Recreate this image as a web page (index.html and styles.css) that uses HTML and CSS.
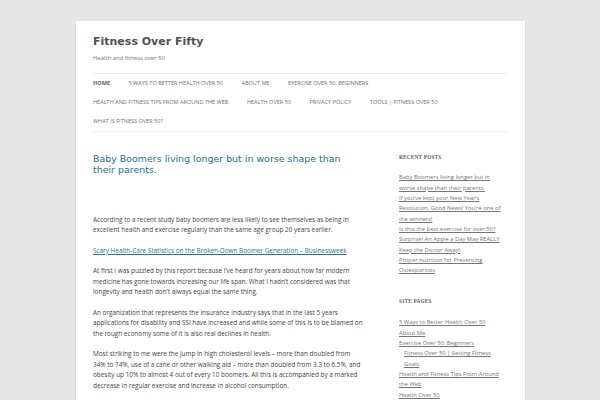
FILE: index.html
```html
<!DOCTYPE html>
<html lang="en">
<head>
<meta charset="utf-8">
<title>Fitness Over Fifty | Health and fitness over 50</title>
<link rel="stylesheet" href="styles.css">
</head>
<body>
<div class="site">
  <header class="site-header">
    <h1 class="site-title"><a href="#">Fitness Over Fifty</a></h1>
    <h2 class="site-description">Health and fitness over 50</h2>
    <nav class="main-navigation">
      <ul class="nav-menu">
        <li class="current"><a href="#">Home</a></li>
        <li><a href="#">5 Ways to Better Health Over 50</a></li>
        <li><a href="#">About Me</a></li>
        <li><a href="#">Exercise Over 50: Beginners</a></li>
        <li><a href="#">Health and Fitness Tips From Around the Web</a></li>
        <li><a href="#">Health Over 50</a></li>
        <li><a href="#">Privacy Policy</a></li>
        <li><a href="#">Tools | Fitness Over 50</a></li>
        <li><a href="#">What is Fitness Over 50?</a></li>
      </ul>
    </nav>
  </header>
  <div class="main">
    <div class="site-content">
      <article class="post">
        <h1 class="entry-title"><a href="#">Baby Boomers living longer but in worse shape than their parents.</a></h1>
        <div class="entry-content">
          <p>According to a recent study baby boomers are less likely to see themselves as being in excellent health and exercise regularly than the same age group 20 years earlier.</p>
          <p><a href="#">Scary Health-Care Statistics on the Broken-Down Boomer Generation &#8211; Businessweek</a></p>
          <p>At first I was puzzled by this report because I&#8217;ve heard for years about how far modern medicine has gone towards increasing our life span. What I hadn&#8217;t considered was that longevity and health don&#8217;t always equal the same thing.</p>
          <p>An organization that represents the insurance industry says that in the last 5 years applications for disability and SSI have increased and while some of this is to be blamed on the rough economy some of it is also real declines in health.</p>
          <p>Most striking to me were the jump in high cholesterol levels &#8211; more than doubled from 34% to 74%, use of a cane or other walking aid &#8211; more than doubled from 3.3 to 6.5%, and obesity up 10% to almost 4 out of every 10 boomers. All this is accompanied by a marked decrease in regular exercise and increase in alcohol consumption.</p>
        </div>
      </article>
    </div>
    <aside class="widget-area">
      <section class="widget">
        <h3 class="widget-title">Recent Posts</h3>
        <ul>
          <li><a href="#">Baby Boomers living longer but in worse shape than their parents.</a></li>
          <li><a href="#">If you&#8217;ve kept your New Year&#8217;s Resolution, Good News! You&#8217;re one of the winners!</a></li>
          <li><a href="#">Is this the best exercise for over 50?</a></li>
          <li><a href="#">Surprise! An Apple a Day May REALLY Keep the Doctor Away!</a></li>
          <li><a href="#">Proper nutrition for Preventing Osteoporosis</a></li>
        </ul>
      </section>
      <section class="widget">
        <h3 class="widget-title">Site Pages</h3>
        <ul>
          <li><a href="#">5 Ways to Better Health Over 50</a></li>
          <li><a href="#">About Me</a></li>
          <li><a href="#">Exercise Over 50: Beginners</a>
            <ul class="children">
              <li><a href="#">Fitness Over 50 | Setting Fitness Goals</a></li>
            </ul>
          </li>
          <li><a href="#">Health and Fitness Tips From Around the Web</a></li>
          <li><a href="#">Health Over 50</a></li>
        </ul>
      </section>
    </aside>
  </div>
</div>
</body>
</html>
```
FILE: styles.css
```css
html, body {
  margin: 0;
  padding: 0;
}
body {
  background: #e6e6e6;
  font-family: "Open Sans", "Liberation Sans", sans-serif;
  color: #444;
  overflow: hidden;
}
a {
  color: #21759b;
}
.site {
  width: 414px;
  margin: 21px auto 0;
  padding: 0 17.5px;
  background: #fff;
  box-shadow: 0 1px 2px rgba(0, 0, 0, 0.1);
  min-height: 400px;
}
.site-header {
  padding-top: 14px;
}
.site-title {
  margin: 0;
  font-family: "DejaVu Sans", sans-serif;
  font-size: 11px;
  line-height: 14px;
  font-weight: bold;
}
.site-title a {
  color: #515151;
  text-decoration: none;
}
.site-description {
  margin: 4px 0 0;
  font-size: 5.9px;
  line-height: 10px;
  font-weight: normal;
  color: #757575;
}
.main-navigation {
  margin-top: 10px;
}
.nav-menu {
  list-style: none;
  margin: 0;
  padding: 0;
  border-top: 1px solid #ededed;
  border-bottom: 1px solid #ededed;
  display: flex;
  flex-wrap: wrap;
}
.nav-menu li {
  margin-right: 18.5px;
  font-size: 5.55px;
  line-height: 19px;
  text-transform: uppercase;
}
.nav-menu a {
  color: #707070;
  text-decoration: none;
}
.nav-menu .current a {
  color: #636363;
  font-weight: bold;
}
.main {
  display: flex;
  justify-content: space-between;
  padding-top: 21px;
}
.site-content {
  width: 270px;
}
.entry-title {
  margin: 0;
  font-family: "DejaVu Sans", sans-serif;
  font-size: 9.45px;
  line-height: 11px;
  font-weight: normal;
}
.entry-title a {
  color: #2a6f8f;
  text-decoration: none;
}
.entry-content {
  padding-top: 39.5px;
  font-size: 6.4px;
  line-height: 10.45px;
}
.entry-content p {
  margin: 0 0 10.2px;
}
.widget-area {
  width: 108px;
  margin-top: -1.5px;
}
.widget {
  margin-bottom: 20.7px;
}
.widget-title {
  margin: 0 0 10.4px;
  font-family: "Liberation Serif", serif;
  font-size: 5.3px;
  line-height: 10.4px;
  font-weight: bold;
  text-transform: uppercase;
  color: #636363;
  letter-spacing: 0.2px;
}
.widget ul {
  list-style: none;
  margin: 0;
  padding: 0;
  font-size: 5.8px;
  line-height: 10.35px;
}
.widget ul.children {
  margin-left: 5px;
}
.widget a {
  color: #757575;
}
```
